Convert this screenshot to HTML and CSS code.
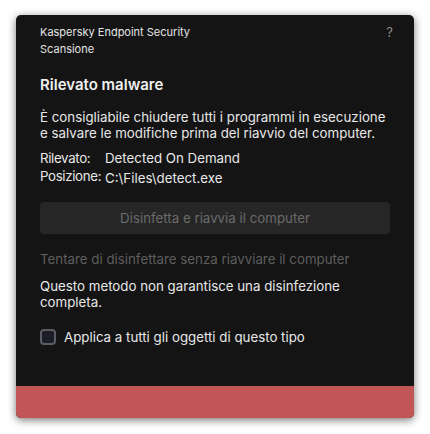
FILE: index.html
```html
<!DOCTYPE html>
<html lang="it">
<head>
<meta charset="utf-8">
<link rel="stylesheet" href="styles.css">
</head>
<body>
<div class="window">
  <div class="content">
    <header class="titlebar">
      <div class="app">
        <div>Kaspersky Endpoint Security</div>
        <div>Scansione</div>
      </div>
      <span class="help">?</span>
    </header>
    <h1 class="heading">Rilevato malware</h1>
    <p class="para">È consigliabile chiudere tutti i programmi in esecuzione e salvare le modifiche prima del riavvio del computer.</p>
    <div class="details">
      <div class="row"><span class="label">Rilevato:</span><span class="value">Detected On Demand</span></div>
      <div class="row"><span class="label">Posizione:</span><span class="value shifted">C:\Files\detect.exe</span></div>
    </div>
    <div class="button">Disinfetta e riavvia il computer</div>
    <div class="link">Tentare di disinfettare senza riavviare il computer</div>
    <p class="note">Questo metodo non garantisce una disinfezione completa.</p>
    <label class="check"><span class="box"></span><span>Applica a tutti gli oggetti di questo tipo</span></label>
  </div>
  <div class="footer"></div>
</div>
</body>
</html>
```
FILE: styles.css
```css
html, body {
  margin: 0;
  padding: 0;
  background: #ffffff;
}
body {
  padding: 15px 16px 16px 16px;
  font-family: Inter, "Noto Sans", sans-serif;
  color: #e8e8e8;
}
.window {
  width: 398px;
  height: 403px;
  background: #141414;
  border-radius: 5px;
  box-shadow: 0 2px 8px rgba(0,0,0,0.55);
  display: flex;
  flex-direction: column;
  overflow: hidden;
}
.content {
  flex: 1;
  padding: 9px 24px 0 24px;
  display: flex;
  flex-direction: column;
}
.titlebar {
  display: flex;
  justify-content: space-between;
  align-items: flex-start;
  font-size: 11px;
  line-height: 17px;
  color: #e4e4e4;
}
.help {
  color: #8c8c8c;
  font-size: 13px;
  margin-right: -3px;
  line-height: 17px;
}
.heading {
  margin: 17px 0 0 0;
  font-size: 15px;
  font-weight: 600;
  line-height: 20px;
  color: #f0f0f0;
}
.para {
  margin: 14px 0 0 0;
  font-size: 13.3px;
  line-height: 16px;
}
.details {
  margin-top: 8px;
  font-size: 13.3px;
  line-height: 18px;
}
.row {
  display: flex;
}
.label {
  width: 65px;
  flex: none;
  white-space: nowrap;
  letter-spacing: -0.35px;
}
.shifted {
  position: relative;
  top: 2px;
}
.button {
  margin-top: 17px;
  height: 32px;
  border-radius: 4px;
  background: #262626;
  color: #6a6a6a;
  font-size: 13.3px;
  display: flex;
  align-items: center;
  justify-content: center;
}
.link {
  margin-top: 17px;
  font-size: 13.3px;
  line-height: 16px;
  color: #5e5e5e;
}
.note {
  margin: 11px 0 0 0;
  font-size: 13.3px;
  line-height: 16px;
}
.check {
  margin-top: 19px;
  display: flex;
  align-items: center;
  gap: 8px;
  font-size: 13.3px;
  line-height: 16px;
}
.box {
  width: 12px;
  height: 12px;
  border: 2px solid #5c5c66;
  border-radius: 4px;
  background: #1d1d28;
  flex: none;
}
.footer {
  height: 32px;
  background: #c25656;
}
```
